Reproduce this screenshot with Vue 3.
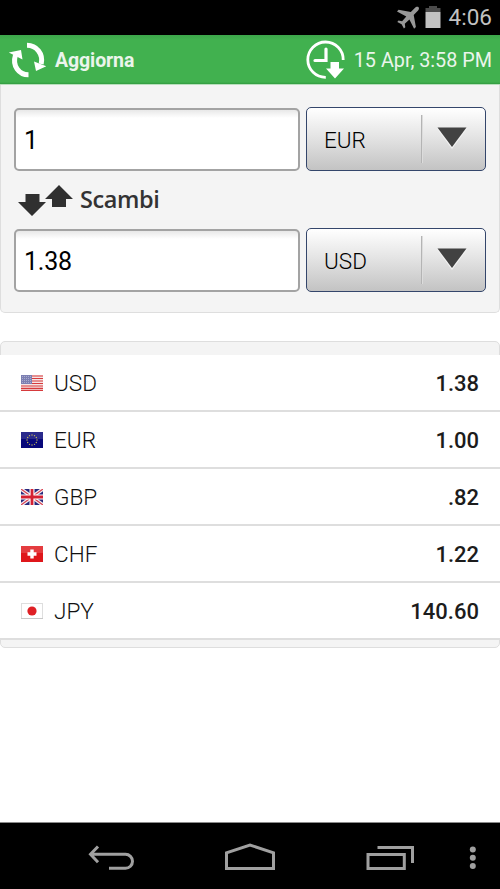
<script setup>
import { ref } from 'vue'

const amounts = ref([
  { value: '1', code: 'EUR' },
  { value: '1.38', code: 'USD' },
])

const rates = [
  { code: 'USD', rate: '1.38' },
  { code: 'EUR', rate: '1.00' },
  { code: 'GBP', rate: '.82' },
  { code: 'CHF', rate: '1.22' },
  { code: 'JPY', rate: '140.60' },
]

const stars = Array.from({ length: 12 }, (_, i) => ({
  x: 11 + 5 * Math.sin((i * Math.PI) / 6),
  y: 8 - 5 * Math.cos((i * Math.PI) / 6),
}))
</script>

<template>
  <div class="screen">
    <div class="status">
      <svg class="plane" width="24" height="24" viewBox="0 0 24 24">
        <path d="M22.6 1.2c-1.2-.9-2.8-.2-3.8.8l-4 4L2.600 3.800 1 5.500l9.300 5-4.200 4.700-3.600-.6L1.300 15.900l4.300 2.300 2.300 4.400 1.400-1.300-.5-3.600 4.600-4.200 4.700 9.200 1.800-1.700-2.200-12 3.900-4c1-1 1.900-2.700 1-3.800z" fill="#989898" />
      </svg>
      <svg class="battery" width="16" height="22" viewBox="0 0 16 22">
        <path d="M4 0h8v2h3.500v4H.5V2H4z" fill="#4b4b4b" />
        <path d="M.5 6h15v16H.5z" fill="#c2c2c2" />
      </svg>
      <span class="time">4:06</span>
    </div>

    <header class="bar">
      <svg class="refresh" width="40" height="36" viewBox="0 0 40 36">
        <g fill="none" stroke="#fff" stroke-width="5">
          <path d="M19 3.300C28.500 3.300 35.500 12 33.200 22" />
          <path d="M20.500 32.800C11 32.800 4 24 7.500 13" />
        </g>
        <path d="M26 19.500l12.300 4.800L28 29zM13 8L.8 10.500 14.500 17.500z" fill="#fff" />
      </svg>
      <span class="update">Aggiorna</span>
      <svg class="clock" width="40" height="40" viewBox="0 0 40 40">
        <path d="M37.200 20A17.700 17.700 0 1 0 19.800 37.400" fill="none" stroke="#fff" stroke-width="2.800" />
        <path d="M20 9v11.500H9" fill="none" stroke="#fff" stroke-width="3.200" stroke-linecap="round" />
        <path d="M24.500 22h8.500v6.500h5L29 38.500l-9-10h4.500z" fill="#fff" />
      </svg>
      <span class="date">15 Apr, 3:58 PM</span>
    </header>

    <section class="converter">
      <template v-for="(item, i) in amounts" :key="i">
        <div class="line">
          <input v-model="item.value" class="amount" type="text" />
          <div class="select">
            <span class="code">{{ item.code }}</span>
            <span class="drop">
              <svg width="32" height="23" viewBox="0 0 32 23">
                <path d="M1 1.500h30L16 22z" fill="#f3f3f3" />
                <path d="M1.500 .5h29L16 20z" fill="#424242" />
              </svg>
            </span>
          </div>
        </div>
        <div v-if="i === 0" class="swap">
          <svg width="56" height="32" viewBox="0 0 56 32">
            <path d="M7.500 9h14v8H28L14 31 0 17h7.500zM41 0l14 14h-7v8H34v-8h-7z" fill="#303030" />
          </svg>
          <span class="swap-text">Scambi</span>
        </div>
      </template>
    </section>

    <section class="rates">
      <div v-for="r in rates" :key="r.code" class="row">
        <svg class="flag" width="22" height="16" viewBox="0 0 22 16">
          <template v-if="r.code === 'USD'">
            <rect width="22" height="16" fill="#f6e5e5" />
            <path d="M0 1h22M0 3.500h22M0 6h22M0 8.500h22M0 11h22M0 13.300h22M0 15.400h22" stroke="#d63a3c" stroke-width="1.150" />
            <rect width="11" height="9" fill="#7c7fb2" />
            <path d="M1 1.500h10M1 3.500h10M1 5.500h10M1 7.500h10" stroke="#b5b6d4" stroke-width=".8" stroke-dasharray="1 1" />
          </template>
          <template v-else-if="r.code === 'EUR'">
            <rect width="22" height="16" fill="#08087a" />
            <rect width="22" height="7" fill="#fff" opacity=".14" />
            <circle v-for="(s, n) in stars" :key="n" :cx="s.x" :cy="s.y" r=".7" fill="#c8bd55" />
          </template>
          <template v-else-if="r.code === 'GBP'">
            <rect width="22" height="16" fill="#29297c" />
            <path d="M0 0l22 16M22 0L0 16" stroke="#f4eef2" stroke-width="3.600" />
            <path d="M0 0l22 16M22 0L0 16" stroke="#d94050" stroke-width="1.200" />
            <path d="M11 0v16M0 8h22" stroke="#fff" stroke-width="5" />
            <path d="M11 0v16M0 8h22" stroke="#d42032" stroke-width="2.800" />
          </template>
          <template v-else-if="r.code === 'CHF'">
            <rect width="22" height="16" fill="#df171b" />
            <rect width="22" height="7" fill="#fff" opacity=".16" />
            <path d="M11 3.500v9M6.500 8h9" stroke="#fff" stroke-width="3.400" />
          </template>
          <template v-else>
            <rect x=".5" y=".5" width="21" height="15" fill="#fff" stroke="#dedede" />
            <path d="M0 15.500h22" stroke="#c8c8c8" />
            <circle cx="11" cy="8" r="4.600" fill="#df2025" />
          </template>
        </svg>
        <span class="name">{{ r.code }}</span>
        <span class="value">{{ r.rate }}</span>
      </div>
    </section>

    <nav class="nav">
      <svg width="500" height="66" viewBox="0 0 500 66" fill="none" stroke="#a0a0a0" stroke-width="3">
        <path d="M90 31.300h35.500a7 7 0 0 1 0 14H109M98 23.500l-7.500 7.800 7.500 8" />
        <path d="M226.500 45.500V29.800L250 22l23.500 7.800v15.700z" />
        <path d="M368 31.500h36.300v14H368zM377.500 24.500h35V40" />
        <g fill="#a0a0a0" stroke="none">
          <circle cx="472.800" cy="26.500" r="3" />
          <circle cx="472.800" cy="34.800" r="3" />
          <circle cx="472.800" cy="43" r="3" />
        </g>
      </svg>
    </nav>
  </div>
</template>

<style>
body {
  margin: 0;
  background: #fff;
}
</style>

<style scoped>
.screen {
  display: flex;
  flex-direction: column;
  width: 500px;
  height: 889px;
  overflow: hidden;
  background: #fff;
  font-family: Roboto, sans-serif;
}

.screen * {
  box-sizing: border-box;
}

.status {
  display: flex;
  flex: none;
  align-items: center;
  justify-content: flex-end;
  height: 35px;
  padding-right: 8px;
  background: #000;
}

.plane {
  margin-right: 5px;
}

.battery {
  margin: 0 8px 1px 0;
}

.time {
  color: #c2c2c2;
  font-size: 22.5px;
  line-height: 35px;
}

.bar {
  display: flex;
  flex: none;
  align-items: center;
  height: 50px;
  padding: 0 8px;
  border-bottom: 1px solid #b9dfbd;
  background: linear-gradient(#3ca64a, #41b14f 5px, #41b14f 47px, #329b40 49px);
  color: #ebf5ec;
  font-size: 19.8px;
}

.refresh {
  margin-right: 7px;
}

.update {
  padding-top: 2px;
  font-size: 19.5px;
  font-weight: 700;
  letter-spacing: -.1px;
}

.clock {
  margin-left: auto;
  margin-right: 8px;
}

.date {
  padding-top: 2px;
}

.converter {
  flex: none;
  height: 228px;
  padding: 22px 13px 0;
  border: 1px solid #dedede;
  border-top: 0;
  border-radius: 0 0 5px 5px;
  background: #f4f4f4;
}

.line {
  display: flex;
  gap: 6px;
  height: 64px;
}

.amount {
  width: 286px;
  height: 63px;
  margin: 1px 0 0;
  padding: 2px 8px 0;
  border: 2px solid #a3a3a3;
  border-radius: 5px;
  outline: 0;
  background: linear-gradient(#e8e8e8, #fff 8px);
  color: #000;
  font: 25px Roboto, sans-serif;
  letter-spacing: -.2px;
}

.select {
  display: flex;
  width: 180px;
  height: 64px;
  padding: 7px 0;
  border: 1px solid #34466b;
  border-radius: 5px;
  background: linear-gradient(#fff, #e5e5e5 45%, #c3c3c3);
}

.code {
  width: 114px;
  padding-left: 17px;
  color: #000;
  font-size: 22.5px;
  font-weight: 300;
  line-height: 50px;
}

.drop {
  display: flex;
  flex: 1;
  justify-content: center;
  padding: 12px 4px 0 0;
  border-left: 1px solid #b4b4b4;
  box-shadow: inset 1px 0 #dcdcdc;
}

.swap {
  display: flex;
  gap: 6px;
  height: 57px;
  padding: 14px 0 0 4px;
}

.swap-text {
  color: #333;
  font-family: "Open Sans", sans-serif;
  font-size: 23.5px;
  font-weight: 600;
  line-height: 28px;
  letter-spacing: -.4px;
}

.rates {
  flex: none;
  height: 307px;
  margin-top: 28px;
  padding-top: 13px;
  border: 1px solid #dedede;
  border-radius: 5px;
  background: #f4f4f4;
}

.row {
  display: flex;
  align-items: center;
  height: 57px;
  margin: 0 -1px;
  padding: 0 21px;
  border-bottom: 2px solid #dedede;
  background: #fff;
  color: #1c1c1c;
  font-size: 22px;
}

.flag {
  margin-right: 11px;
}

.name {
  padding-top: 1px;
  color: #111;
  font-size: 22.6px;
  font-weight: 300;
}

.value {
  margin-left: auto;
  padding-top: 2px;
  font-weight: 500;
}

.nav {
  height: 67px;
  margin-top: auto;
  border-top: 1px solid #8a8a8a;
  background: #000;
}

.nav svg {
  display: block;
}
</style>
